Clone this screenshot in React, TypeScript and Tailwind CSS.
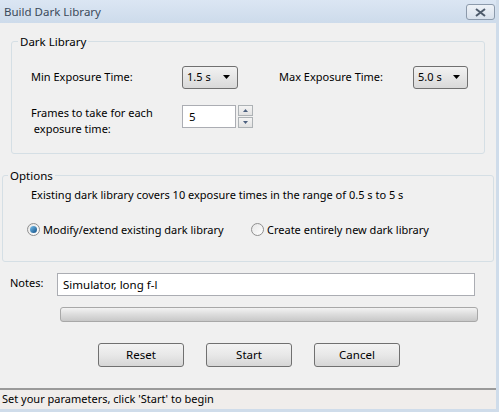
import React from "react";

const font = { fontFamily: '"Noto Sans", "Open Sans", sans-serif' };

const Combo = ({ value, className }: { value: string; className: string }) => (
  <div
    className={`flex h-[23px] items-center justify-between rounded-[3px] border border-[#707070] bg-gradient-to-b from-[#f2f2f2] to-[#d9d9d9] pl-[4px] pr-[6px] text-[11px] text-black ${className}`}
  >
    <span>{value}</span>
    <svg width="8" height="5" viewBox="0 0 8 5">
      <path d="M0 0 H7 L3.5 4 Z" fill="#000" />
    </svg>
  </div>
);

const Radio = ({ checked, label }: { checked?: boolean; label: string }) => (
  <label className="flex items-center gap-[3px]">
    <span className="flex h-[13px] w-[13px] items-center justify-center rounded-full border border-[#8f8f8f] bg-gradient-to-br from-[#e6e6e6] to-[#ffffff]">
      {checked && (
        <span className="h-[7px] w-[7px] rounded-full bg-gradient-to-br from-[#79c3ef] to-[#0e4f86]" />
      )}
    </span>
    <span>{label}</span>
  </label>
);

const Btn = ({ label }: { label: string }) => (
  <button className="h-[24px] w-[86px] rounded-[3px] border border-[#707070] bg-gradient-to-b from-[#f3f3f3] via-[#e8e8e8] to-[#d6d6d6] text-[11.5px] text-black">
    {label}
  </button>
);

export default function App() {
  return (
    <div
      className="relative flex h-[412px] w-[499px] flex-col overflow-hidden border-b-[3px] border-r-[3px] border-[#cfdcea] bg-[#f0f0f0] text-[11px] text-black"
      style={font}
    >
      {/* title bar */}
      <div className="flex h-[23px] shrink-0 items-center justify-between bg-gradient-to-b from-[#dbe6f3] to-[#cddbeb] pl-[4px] pr-[1px]">
        <span className="text-[11.5px] text-[#3b4a5a]">Build Dark Library</span>
        <div className="mt-[1px] flex h-[16px] w-[29px] items-center justify-center rounded-[3px] border border-[#8c9aab] bg-gradient-to-b from-[#eef2f7] to-[#d8e1ec]">
          <svg width="11" height="9" viewBox="0 0 11 9">
            <path d="M1 1 L10 8 M10 1 L1 8" stroke="#4e5b6b" strokeWidth="2" />
          </svg>
        </div>
      </div>

      {/* Dark Library group */}
      <fieldset className="mx-[11px] mt-[11px] h-[120px] shrink-0 rounded-[3px] border border-[#d5dfe5] px-0 pb-0">
        <legend className="ml-[6px] px-[2px] text-[11.5px] leading-[15px]">Dark Library</legend>
        <div className="mt-[17px] flex items-center">
          <span className="ml-[19px] w-[151px]">Min Exposure Time:</span>
          <Combo value="1.5 s" className="w-[56px]" />
          <span className="ml-[41px] w-[134px]">Max Exposure Time:</span>
          <Combo value="5.0 s" className="w-[55px]" />
        </div>
        <div className="mt-[16px] flex items-start">
          <span className="ml-[19px] w-[151px] leading-[16px]">
            Frames to take for each
            <br />
            &nbsp;exposure time:
          </span>
          <div className="flex items-center">
            <div className="flex h-[23px] w-[54px] items-center border border-[#abadb3] bg-white pl-[6px] text-[11.5px]">
              5
            </div>
            <div className="ml-[2px] flex flex-col gap-[1px]">
              <div className="flex h-[11px] w-[15px] items-center justify-center border border-[#adb2b5] bg-gradient-to-b from-[#f4f4f4] to-[#e2e2e2]">
                <svg width="5" height="3" viewBox="0 0 5 3">
                  <path d="M0 3 H5 L2.5 0 Z" fill="#4c607f" />
                </svg>
              </div>
              <div className="flex h-[11px] w-[15px] items-center justify-center border border-[#adb2b5] bg-gradient-to-b from-[#f4f4f4] to-[#e2e2e2]">
                <svg width="5" height="3" viewBox="0 0 5 3">
                  <path d="M0 0 H5 L2.5 3 Z" fill="#4c607f" />
                </svg>
              </div>
            </div>
          </div>
        </div>
      </fieldset>

      {/* Options group */}
      <fieldset className="mx-[2px] mt-[14px] h-[94px] shrink-0 rounded-[3px] border border-[#d5dfe5] px-0 pb-0">
        <legend className="ml-[5px] px-[2px] text-[11.5px] leading-[15px]">Options</legend>
        <div className="ml-[28px] mt-[4px]">
          Existing dark library covers 10 exposure times in the range of 0.5 s to 5 s
        </div>
        <div className="ml-[24px] mt-[18px] flex items-center">
          <div className="w-[224px]">
            <Radio checked label="Modify/extend existing dark library" />
          </div>
          <Radio label="Create entirely new dark library" />
        </div>
      </fieldset>

      {/* Notes */}
      <div className="mt-[11px] flex items-start">
        <span className="ml-[10px] mt-[2px] w-[47px]">Notes:</span>
        <div className="flex h-[23px] w-[418px] items-center border border-[#abadb3] bg-white pl-[5px] text-[11.5px]">
          Simulator, long f-l
        </div>
      </div>
      <div className="ml-[60px] mt-[11px] h-[15px] w-[418px] rounded-[3px] border border-[#a8a8a8] bg-gradient-to-b from-[#f3f3f3] via-[#dcdcdc] to-[#c8c8c8]" />

      {/* Buttons */}
      <div className="ml-[98px] mt-[21px] flex gap-[22px]">
        <Btn label="Reset" />
        <Btn label="Start" />
        <Btn label="Cancel" />
      </div>

      {/* Status bar */}
      <div className="mt-auto flex h-[21px] items-center border-t-2 border-[#9a9a9a] bg-[#f0edeb] pl-[2px]">
        Set your parameters, click 'Start' to begin
      </div>
    </div>
  );
}
